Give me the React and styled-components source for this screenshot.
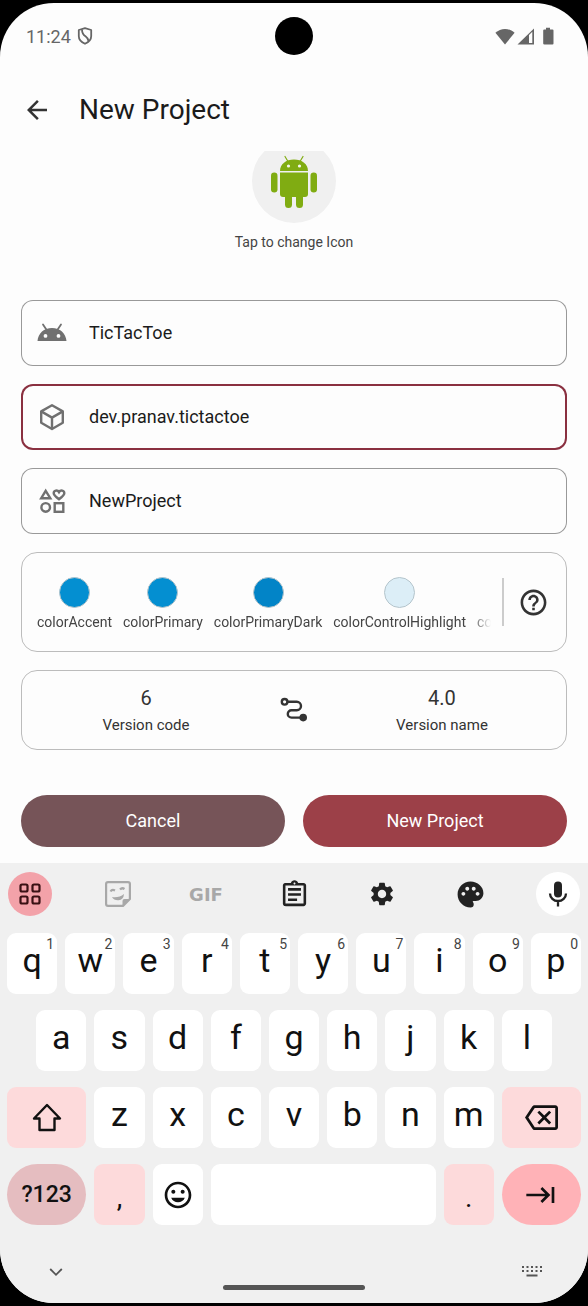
import React from "react";
import styled, { createGlobalStyle, css } from "styled-components";
import {
  MdArrowBack,
  MdHelpOutline,
  MdOutlineAssignment,
  MdSettings,
  MdPalette,
  MdOutlineBackspace,
  MdOutlineInsertEmoticon,
  MdKeyboardTab,
} from "react-icons/md";

const GlobalStyle = createGlobalStyle`
  *, *::before, *::after { box-sizing: border-box; }
  html, body, #root { min-height: 100vh; }
  body { margin: 0; background: #000; font-family: Roboto, "Noto Sans", sans-serif; }
  #root { display: flex; }
  button, input { font: inherit; color: inherit; }
  svg { display: block; flex: none; }
`;

const Frame = styled.div`
  flex: 1;
  min-width: 0;
  display: flex;
  padding: 3px 0;
  background: #000;
`;

const Screen = styled.div`
  flex: 1;
  min-width: 0;
  display: flex;
  flex-direction: column;
  overflow: hidden;
  border-radius: 54px;
  background: #fdfdfd;
  color: #1b1b1b;
`;

const StatusBar = styled.header`
  display: grid;
  grid-template-columns: 1fr 38px 1fr;
  align-items: center;
  height: 66px;
  padding: 0 30px 0 26px;
  color: #666;
`;

const StatusGroup = styled.div`
  display: flex;
  align-items: center;
  justify-content: ${(p) => (p.$end ? "flex-end" : "flex-start")};
  gap: ${(p) => (p.$end ? 2 : 6)}px;
  font-size: 18px;
`;

const Camera = styled.div`
  width: 38px;
  height: 38px;
  margin-left: 2px;
  border-radius: 50%;
  background: #000;
`;

const AppBar = styled.div`
  display: flex;
  align-items: center;
  gap: 27px;
  height: 82px;
  padding: 0 22px;
`;

const IconButton = styled.button`
  display: flex;
  align-items: center;
  justify-content: center;
  padding: 0;
  border: 0;
  background: none;
  color: #333;
`;

const Title = styled.h1`
  margin: 0;
  font-size: 28px;
  font-weight: 400;
  line-height: 36px;
`;

const Form = styled.form`
  flex: 1;
  display: flex;
  flex-direction: column;
  gap: 18px;
  overflow: hidden;
  padding: 0 21px 16px;
`;

const IconPicker = styled.button`
  align-self: center;
  display: flex;
  flex-direction: column;
  align-items: center;
  gap: 9px;
  margin: -12px 0 30px;
  padding: 0;
  border: 0;
  background: none;
  font-size: 14px;
  line-height: 20px;
  color: #444;
`;

const IconDisc = styled.span`
  display: flex;
  align-items: center;
  justify-content: center;
  width: 84px;
  height: 84px;
  border-radius: 50%;
  background: #f0f0f0;
`;

const Field = styled.label`
  display: flex;
  align-items: center;
  gap: 21px;
  height: 66px;
  padding: 0 15px;
  border-radius: 12px;
  box-shadow: inset 0 0 0 ${(p) => (p.$active ? "2px #8a3040" : "1px #999")};
  color: #707070;
`;

const FieldInput = styled.input`
  flex: 1;
  min-width: 0;
  padding: 0;
  border: 0;
  outline: 0;
  background: none;
  font-size: 18px;
  line-height: 24px;
  color: #1b1b1b;
`;

const Card = styled.section`
  display: flex;
  align-items: center;
  height: ${(p) => p.$height}px;
  border: 1px solid #bcbcbc;
  border-radius: 16px;
  color: #333;
`;

const SwatchStrip = styled.div`
  flex: 1;
  min-width: 0;
  display: flex;
  gap: 11px;
  margin: 0 11px 0 15px;
  padding-top: 4px;
  overflow: hidden;
  mask-image: linear-gradient(to right, #000 calc(100% - 20px), transparent);
`;

const Swatch = styled.button`
  flex: none;
  display: flex;
  flex-direction: column;
  align-items: center;
  gap: 4px;
  padding: 0;
  border: 0;
  background: none;
  font-size: 14px;
  line-height: 20px;
  color: #444;
`;

const SwatchDot = styled.span`
  width: 31px;
  height: 31px;
  border: 1px solid #b4c4cb;
  border-radius: 50%;
  background: ${(p) => p.$color};
`;

const HelpButton = styled(IconButton)`
  width: 64px;
  height: 48px;
  padding-right: 4px;
  border-left: 2px solid #ccc;
`;

const Version = styled.div`
  flex: 1;
  display: flex;
  flex-direction: column-reverse;
  align-items: center;
  gap: 4px;
`;

const VersionLabel = styled.span`
  font-size: 15px;
  line-height: 20px;
`;

const VersionValue = styled.span`
  font-size: 20px;
  line-height: 26px;
`;

const VersionIcon = styled.div`
  display: flex;
  justify-content: center;
  width: 48px;
`;

const Actions = styled.div`
  display: flex;
  gap: 18px;
  margin-top: 27px;
`;

const ActionButton = styled.button`
  flex: 1;
  height: 52px;
  padding: 0 0 2px;
  border: 0;
  border-radius: 26px;
  background: ${(p) => (p.$primary ? "#9c4048" : "#765458")};
  font-size: 18px;
  color: #fff;
`;

const Keyboard = styled.section`
  padding: 0 7px;
  background: #f0f0f0;
  color: #111;
`;

const Toolbar = styled.div`
  display: flex;
  justify-content: space-between;
  padding: 9px 1px 17px;
`;

const Tool = styled(IconButton)`
  width: 44px;
  height: 44px;
  border-radius: 50%;
  background: ${(p) => p.$bg || "none"};
  color: ${(p) => (p.$faded ? "#a8a8a8" : "#222")};
  font-family: "DejaVu Sans", sans-serif;
  font-size: 18px;
  font-weight: 700;
`;

const Keys = styled.div`
  display: grid;
  grid-template-columns: repeat(20, minmax(0, 1fr));
  grid-auto-rows: 61px;
  gap: 16px 8px;
`;

const wideKey = css`
  font-size: 23px;
  font-weight: 500;
`;

const Key = styled.button`
  position: relative;
  display: flex;
  align-items: center;
  justify-content: center;
  grid-column: ${(p) => (p.$start ? `${p.$start} / ` : "")}span ${(p) => p.$span || 2};
  padding: 0 0 8px;
  border: 0;
  border-radius: ${(p) => (p.$pill ? 31 : 9)}px;
  background: ${(p) => p.$bg || "#fff"};
  font-size: 34px;
  line-height: 40px;
  ${(p) => p.$wide && wideKey}
  ${(p) => p.$icon && "padding: 0;"}
  ${(p) => p.$low && "padding: 6px 0 0; font-size: 28px;"}
`;

const Hint = styled.span`
  position: absolute;
  top: 2px;
  right: 3px;
  font-size: 14px;
  line-height: 18px;
  color: #444;
`;

const NavBar = styled.div`
  display: grid;
  grid-template-columns: 1fr 142px 1fr;
  height: 78px;
  padding: 34px 36px 0;
  color: #555;
`;

const NavButton = styled(IconButton)`
  justify-self: ${(p) => (p.$end ? "end" : "start")};
  width: 26px;
  height: 26px;
  color: #555;
`;

const Handle = styled.div`
  align-self: end;
  height: 5px;
  margin-bottom: 13px;
  border-radius: 3px;
  background: #555;
`;

const ShieldIcon = () => (
  <svg width="16" height="18" viewBox="0 0 16 18" fill="none" stroke="currentColor" strokeWidth="1.800">
    <path d="M8 1.200L14.200 3v6.200c0 3.600-2.800 6-6.200 7.600-3.400-1.600-6.200-4-6.200-7.600V3z" strokeLinejoin="round" />
    <path d="M5 2.500C5 6.500 6.500 8 8.500 9.300S11 12 11.500 14" />
  </svg>
);

const WifiIcon = () => (
  <svg width="20" height="17" viewBox="0 0 20 17" fill="currentColor">
    <path d="M10 16.500L.4 4.800C3.200 2.300 6.400 1 10 1s6.800 1.300 9.600 3.800z" />
  </svg>
);

const CellIcon = () => (
  <svg width="17" height="17" viewBox="0 0 17 17" fill="currentColor">
    <path fillRule="evenodd" d="M17 .5V16.500H.5zM12 7v8h3.300V3.800z" />
  </svg>
);

const BatteryIcon = () => (
  <svg width="22" height="18" viewBox="0 0 22 18" fill="currentColor">
    <path d="M10 .8h4v1.700h2.500q1 0 1 1V16.500q0 1-1 1h-8q-1.300 0-1.300-1V3.500q0-1 1-1H10z" />
  </svg>
);

const AndroidRobot = () => (
  <svg width="48" height="54" viewBox="0 0 48 54" fill="#80ac12">
    <path d="M15 2.500l3 5M33 2.500l-3 5" stroke="#80ac12" strokeWidth="1.200" strokeLinecap="round" />
    <path d="M10 17C10 10 16 5.500 24 5.500S38 10 38 17z" />
    <circle cx="18.500" cy="12" r="1.600" fill="#f6f9ee" />
    <circle cx="29.500" cy="12" r="1.600" fill="#f6f9ee" />
    <path d="M10 18.500h28V40q0 3-3 3H13q-3 0-3-3z" />
    <rect x="1" y="18.500" width="6.500" height="20" rx="3.200" />
    <rect x="40.500" y="18.500" width="6.500" height="20" rx="3.200" />
    <path d="M15 42h7v8.500a3.500 3.500 0 0 1-7 0zM26 42h7v8.500a3.500 3.500 0 0 1-7 0z" />
  </svg>
);

const AndroidHead = () => (
  <svg width="32" height="32" viewBox="0 0 32 32" fill="currentColor">
    <path d="M7 7.500l4 6M25 7.500l-4 6" stroke="currentColor" strokeWidth="1.800" strokeLinecap="round" />
    <path
      fillRule="evenodd"
      d="M1.500 24C2.200 16.200 8 11 16 11s13.800 5.200 14.500 13zM9.500 17a1.900 1.900 0 1 0 0 3.800 1.900 1.900 0 0 0 0-3.800zm13 0a1.900 1.900 0 1 0 0 3.800 1.900 1.900 0 0 0 0-3.800z"
    />
  </svg>
);

const CubeIcon = () => (
  <svg width="32" height="32" viewBox="0 0 32 32" fill="none" stroke="currentColor" strokeWidth="2.400" strokeLinejoin="round">
    <path d="M16 4.300L26.800 10.400V21.800L16 28 5.200 21.800V10.400z" />
    <path d="M5.200 10.400L16 16.600l10.800-6.200M16 16.600V28" />
  </svg>
);

const ShapesIcon = () => (
  <svg width="32" height="32" viewBox="0 0 32 32" fill="none" stroke="currentColor" strokeWidth="2.400">
    <path d="M9.700 5.800L14.300 13.200H5.200z" />
    <path d="M23 14.200c-3.200-2.400-5.300-4-5.300-6 0-3 3.800-3.600 5.300-1 1.500-2.600 5.300-2 5.300 1 0 2-2.100 3.600-5.300 6z" />
    <circle cx="9.700" cy="22.400" r="4.300" />
    <rect x="18.700" y="18.200" width="8.600" height="8.600" />
  </svg>
);

const RouteIcon = () => (
  <svg width="28" height="26" viewBox="0 0 28 26" fill="none" stroke="currentColor" strokeWidth="2.400">
    <circle cx="4.600" cy="4.800" r="2.800" />
    <path d="M7.400 4.800h9.400a4.200 4.200 0 0 1 0 8.400H11.500a3.700 3.700 0 0 0 0 7.400H22" />
    <circle cx="23.200" cy="20.600" r="3.800" fill="currentColor" stroke="none" />
  </svg>
);

const GridIcon = () => (
  <svg width="24" height="24" viewBox="0 0 24 24" fill="none" stroke="#3a1114" strokeWidth="2.200">
    <rect x="2.500" y="2.500" width="7" height="7" rx="1.500" />
    <rect x="14.500" y="2.500" width="7" height="7" rx="1.500" />
    <rect x="2.500" y="14.500" width="7" height="7" rx="1.500" />
    <rect x="14.500" y="14.500" width="7" height="7" rx="1.500" />
  </svg>
);

const StickerIcon = () => (
  <svg width="28" height="28" viewBox="0 0 28 28" fill="none" stroke="currentColor" strokeWidth="2.200">
    <path d="M4 2.100h20q1.900 0 1.900 1.900v15L19 25.900H4q-1.900 0-1.900-1.900V4q0-1.900 1.900-1.900z" strokeLinejoin="round" />
    <path d="M18.500 26v-5q0-2 2-2H26l-7.500 7z" fill="currentColor" stroke="none" />
    <path d="M8 17q7 1 12-3-.5 6-5.500 6.200Q10 20.500 8 17z" fill="currentColor" stroke="none" />
    <path d="M6.500 11.500q1.500-2.500 4.500-1M16 9.500q2-2.200 4.500-.5" />
  </svg>
);

const MicIcon = () => (
  <svg width="24" height="28" viewBox="0 0 24 28" fill="currentColor">
    <rect x="8" y="1.500" width="8" height="16" rx="4" />
    <path d="M4 13.500a8 7.500 0 0 0 16 0M12 21v5.500" fill="none" stroke="currentColor" strokeWidth="2.300" />
  </svg>
);

const ShiftIcon = () => (
  <svg width="32" height="30" viewBox="0 0 32 30" fill="none" stroke="currentColor" strokeWidth="2.400" strokeLinejoin="round">
    <path d="M16 2L29 15.500H23.500V27H8.500V15.500H3z" />
  </svg>
);

const ChevronIcon = () => (
  <svg width="14" height="10" viewBox="0 0 14 10" fill="none" stroke="currentColor" strokeWidth="1.800">
    <path d="M1.200 2L7 7.800 12.800 2" />
  </svg>
);

const KeyboardIcon = () => (
  <svg width="22" height="14" viewBox="0 0 22 14" fill="currentColor">
    {[1, 5.5, 10, 14.5, 19].map((x) => (
      <React.Fragment key={x}>
        <rect x={x} y="1" width="2" height="2" />
        <rect x={x} y="5" width="2" height="2" />
      </React.Fragment>
    ))}
    <rect x="5.500" y="9.500" width="11" height="2" />
  </svg>
);

const fields = [
  { label: "App name", value: "TicTacToe", Icon: AndroidHead },
  { label: "Package name", value: "dev.pranav.tictactoe", Icon: CubeIcon, active: true },
  { label: "Project name", value: "NewProject", Icon: ShapesIcon },
];

const swatches = [
  ["colorAccent", "#048fd1"],
  ["colorPrimary", "#048fd1"],
  ["colorPrimaryDark", "#0284c7"],
  ["colorControlHighlight", "#dceef7"],
  ["colorControlNormal", "#57beee"],
];

const PINK = "#fddadb";

export default function App() {
  return (
    <>
      <GlobalStyle />
      <Frame>
        <Screen>
          <StatusBar>
            <StatusGroup>
              11:24 <ShieldIcon />
            </StatusGroup>
            <Camera />
            <StatusGroup $end>
              <WifiIcon />
              <CellIcon />
              <BatteryIcon />
            </StatusGroup>
          </StatusBar>
          <AppBar>
            <IconButton aria-label="Back">
              <MdArrowBack size={30} />
            </IconButton>
            <Title>New Project</Title>
          </AppBar>
          <Form onSubmit={(e) => e.preventDefault()}>
            <IconPicker type="button">
              <IconDisc>
                <AndroidRobot />
              </IconDisc>
              Tap to change Icon
            </IconPicker>
            {fields.map(({ label, value, Icon, active }) => (
              <Field key={label} $active={active}>
                <Icon />
                <FieldInput aria-label={label} defaultValue={value} spellCheck={false} />
              </Field>
            ))}
            <Card $height={100}>
              <SwatchStrip>
                {swatches.map(([name, color]) => (
                  <Swatch type="button" key={name}>
                    <SwatchDot $color={color} />
                    {name}
                  </Swatch>
                ))}
              </SwatchStrip>
              <HelpButton type="button" aria-label="Help">
                <MdHelpOutline size={31} />
              </HelpButton>
            </Card>
            <Card $height={80}>
              <Version>
                <VersionLabel>Version code</VersionLabel>
                <VersionValue>6</VersionValue>
              </Version>
              <VersionIcon>
                <RouteIcon />
              </VersionIcon>
              <Version>
                <VersionLabel>Version name</VersionLabel>
                <VersionValue>4.0</VersionValue>
              </Version>
            </Card>
            <Actions>
              <ActionButton type="button">Cancel</ActionButton>
              <ActionButton $primary>New Project</ActionButton>
            </Actions>
          </Form>
          <Keyboard aria-label="Keyboard">
            <Toolbar>
              <Tool aria-label="Tools" $bg="#f3a2a9"><GridIcon /></Tool>
              <Tool aria-label="Stickers" $faded><StickerIcon /></Tool>
              <Tool $faded>GIF</Tool>
              <Tool aria-label="Clipboard"><MdOutlineAssignment size={31} /></Tool>
              <Tool aria-label="Settings"><MdSettings size={28} /></Tool>
              <Tool aria-label="Theme"><MdPalette size={31} /></Tool>
              <Tool aria-label="Voice input" $bg="#fff"><MicIcon /></Tool>
            </Toolbar>
            <Keys>
              {[..."qwertyuiop"].map((k, i) => (
                <Key key={k}>
                  {k}
                  <Hint>{(i + 1) % 10}</Hint>
                </Key>
              ))}
              {[..."asdfghjkl"].map((k, i) => (
                <Key key={k} $start={i === 0 ? 2 : undefined}>{k}</Key>
              ))}
              <Key aria-label="Shift" $start={1} $span={3} $bg={PINK} $icon><ShiftIcon /></Key>
              {[..."zxcvbnm"].map((k) => (
                <Key key={k}>{k}</Key>
              ))}
              <Key aria-label="Backspace" $span={3} $bg={PINK} $icon><MdOutlineBackspace size={33} /></Key>
              <Key $span={3} $bg="#e5bdc0" $pill $wide $icon>?123</Key>
              <Key $bg={PINK} $low>,</Key>
              <Key aria-label="Emoji" $icon><MdOutlineInsertEmoticon size={32} /></Key>
              <Key aria-label="Space" $span={8} />
              <Key $bg={PINK} $low>.</Key>
              <Key aria-label="Next" $span={3} $bg="#ffb2b7" $pill $icon><MdKeyboardTab size={32} /></Key>
            </Keys>
            <NavBar>
              <NavButton aria-label="Hide keyboard"><ChevronIcon /></NavButton>
              <Handle />
              <NavButton aria-label="Switch keyboard" $end><KeyboardIcon /></NavButton>
            </NavBar>
          </Keyboard>
        </Screen>
      </Frame>
    </>
  );
}
